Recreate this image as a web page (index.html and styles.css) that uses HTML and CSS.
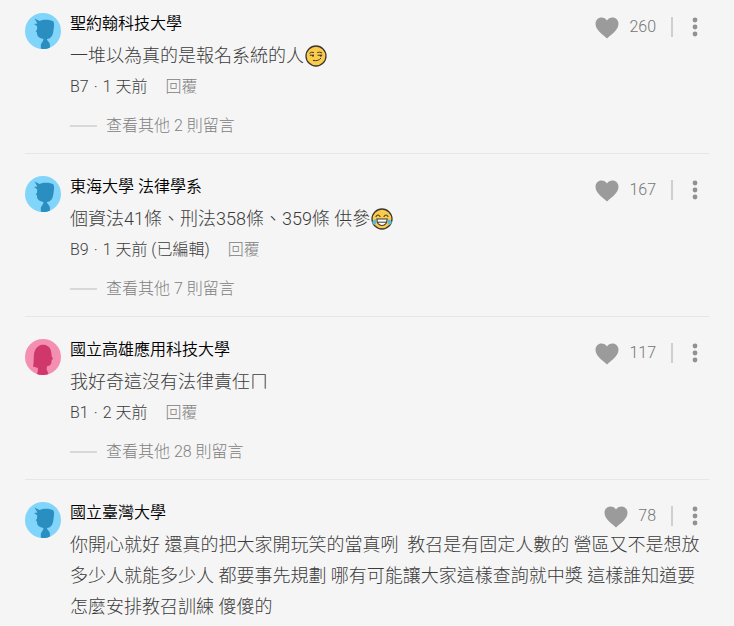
FILE: index.html
```html
<!DOCTYPE html>
<html lang="zh-Hant">
<head>
  <meta charset="UTF-8">
  <meta name="viewport" content="width=device-width, initial-scale=1.0">
  <title>留言</title>
  <link rel="stylesheet" href="styles.css">
</head>
<body>
  <!-- 共用圖示 -->
  <svg class="sprite" aria-hidden="true">
    <symbol id="boy" viewBox="0 0 36 36">
      <circle cx="18" cy="18" r="18" fill="#81d4fa"/>
      <path d="M9.500 5.500 L14.500 8 C18 6.400 25 6.200 28.500 8.400 C29.600 11 28.800 15 28.200 19 C27.600 23.500 25 25.800 22 26 C21.800 28 24.600 29 24.800 31 L25 34.500 C22 36.300 19 36.300 15.800 35.800 L15.900 31.500 C16.500 29.500 18.500 28.500 18.400 26 C14.500 25.400 12.200 23.600 12 20.800 L11.800 19 L10.600 18.300 L12 16.800 L12.200 13.200 L9 11 L12.400 10.600 Z" fill="#2a8fc0"/>
    </symbol>
    <symbol id="girl" viewBox="0 0 36 36">
      <circle cx="18" cy="18" r="18" fill="#f48fb1"/>
      <path d="M8 27.500 C9.500 22 7.800 16 10 11.500 C12 6.500 17 5 21 6.200 C25.500 7.500 26.500 12 26.600 17 L28 20 L26.600 21 C26.600 25 25.500 27 22 27.200 L21.600 30 C22 32 23 33 23.400 35 C20 36.400 15 36.300 12 35 C12.800 33 13 31.500 12.900 29 Z" fill="#d0386c"/>
    </symbol>
    <symbol id="heart" viewBox="0 0 24 22">
      <path d="M12 21.500 C9 18.500 0.500 13.500 0.500 6.800 C0.500 3 3.200 0.500 6.500 0.500 C8.800 0.500 10.900 1.700 12 3.600 C13.100 1.700 15.200 0.500 17.500 0.500 C20.800 0.500 23.500 3 23.500 6.800 C23.500 13.500 15 18.500 12 21.500 Z" fill="#9b9b9b"/>
    </symbol>
    <symbol id="dots" viewBox="0 0 6 20">
      <circle cx="3" cy="3" r="2.400" fill="#919191"/>
      <circle cx="3" cy="10" r="2.400" fill="#919191"/>
      <circle cx="3" cy="17" r="2.400" fill="#919191"/>
    </symbol>
  </svg>

  <main class="comments">
    <article class="comment">
      <svg class="avatar" aria-hidden="true"><use href="#boy"/></svg>
      <div class="content">
        <header class="head">
          <h2 class="school">聖約翰科技大學</h2>
          <div class="actions">
            <button class="like" type="button"><svg class="heart" aria-hidden="true"><use href="#heart"/></svg>260</button>
            <button class="more" type="button" aria-label="更多"><svg class="dots" aria-hidden="true"><use href="#dots"/></svg></button>
          </div>
        </header>
        <p class="text">一堆以為真的是報名系統的人<svg class="emoji" viewBox="0 0 22 22" role="img" aria-label="😏"><circle cx="11" cy="11" r="10" fill="#fccb4c" stroke="#3b3833" stroke-width="1.300"/><path d="M4.800 8 Q6.500 6.600 8.600 7.400 M12.600 7.400 Q14.800 6.400 16.800 7.800 M5.200 10.200 H8.600 M13 10.200 H16.800 M8.300 15.500 Q13.500 16.500 15.800 13.300" fill="none" stroke="#3b3833" stroke-width="1" stroke-linecap="round"/><circle cx="8" cy="10.800" r="1" fill="#3b3833"/><circle cx="15.800" cy="10.800" r="1" fill="#3b3833"/></svg></p>
        <div class="meta"><span>B7<i class="dot">·</i>1 天前</span><button class="reply" type="button">回覆</button></div>
        <button class="expand" type="button">查看其他 2 則留言</button>
      </div>
    </article>

    <article class="comment">
      <svg class="avatar" aria-hidden="true"><use href="#boy"/></svg>
      <div class="content">
        <header class="head">
          <h2 class="school">東海大學 法律學系</h2>
          <div class="actions">
            <button class="like" type="button"><svg class="heart" aria-hidden="true"><use href="#heart"/></svg>167</button>
            <button class="more" type="button" aria-label="更多"><svg class="dots" aria-hidden="true"><use href="#dots"/></svg></button>
          </div>
        </header>
        <p class="text">個資法41條、刑法358條、359條 供參<svg class="emoji" viewBox="0 0 22 22" role="img" aria-label="😂"><circle cx="11" cy="11" r="10" fill="#fccb4c" stroke="#3b3833" stroke-width="1.300"/><path d="M5 8.500 Q7 5.500 9 8.500 M13 8.500 Q15 5.500 17 8.500" fill="none" stroke="#3b3833" stroke-width="1.100" stroke-linecap="round"/><path d="M5.800 11 H16.200 Q15.800 17.500 11 17.500 Q6.200 17.500 5.800 11 Z" fill="#fff" stroke="#3b3833" stroke-width="1.200"/><path d="M7 14.200 H15" stroke="#3b3833" stroke-width="1"/><path d="M5.500 11 Q1 12 1.200 15 Q2 17.500 4.500 16.500 Q6 15 5.500 11 Z M16.500 11 Q21 12 20.800 15 Q20 17.500 17.500 16.500 Q16 15 16.500 11 Z" fill="#61b9cf"/></svg></p>
        <div class="meta"><span>B9<i class="dot">·</i>1 天前 (已編輯)</span><button class="reply" type="button">回覆</button></div>
        <button class="expand" type="button">查看其他 7 則留言</button>
      </div>
    </article>

    <article class="comment">
      <svg class="avatar" aria-hidden="true"><use href="#girl"/></svg>
      <div class="content">
        <header class="head">
          <h2 class="school">國立高雄應用科技大學</h2>
          <div class="actions">
            <button class="like" type="button"><svg class="heart" aria-hidden="true"><use href="#heart"/></svg>117</button>
            <button class="more" type="button" aria-label="更多"><svg class="dots" aria-hidden="true"><use href="#dots"/></svg></button>
          </div>
        </header>
        <p class="text">我好奇這沒有法律責任ㄇ</p>
        <div class="meta"><span>B1<i class="dot">·</i>2 天前</span><button class="reply" type="button">回覆</button></div>
        <button class="expand" type="button">查看其他 28 則留言</button>
      </div>
    </article>

    <article class="comment">
      <svg class="avatar" aria-hidden="true"><use href="#boy"/></svg>
      <div class="content">
        <header class="head">
          <h2 class="school">國立臺灣大學</h2>
          <div class="actions">
            <button class="like" type="button"><svg class="heart" aria-hidden="true"><use href="#heart"/></svg>78</button>
            <button class="more" type="button" aria-label="更多"><svg class="dots" aria-hidden="true"><use href="#dots"/></svg></button>
          </div>
        </header>
        <p class="text">你開心就好 還真的把大家開玩笑的當真咧&nbsp; 教召是有固定人數的 營區又不是想放多少人就能多少人 都要事先規劃 哪有可能讓大家這樣查詢就中獎 這樣誰知道要怎麼安排教召訓練 傻傻的</p>
      </div>
    </article>
  </main>
</body>
</html>
```
FILE: styles.css
```css
* {
  box-sizing: border-box;
}

body {
  margin: 0;
  background: #f5f5f5;
  color: #3c3c3c;
  font-family: Roboto, "Noto Sans CJK TC", sans-serif;
  font-size: 16px;
  font-weight: 300;
  line-height: 24px;
}

button {
  padding: 0;
  border: 0;
  background: none;
  color: inherit;
  font: inherit;
  cursor: pointer;
}

.sprite {
  display: none;
}

.comments {
  padding: 0 25px;
}

.comment {
  display: flex;
  gap: 9px;
  padding: 21px 0 15px;
  border-bottom: 1px solid #e6e6e6;
}

.comment:first-child {
  padding-top: 12px;
}

.comment:last-child {
  padding-bottom: 0;
  border-bottom: 0;
}

.avatar {
  flex: none;
  width: 36px;
  height: 36px;
  margin-top: 1px;
}

.content {
  flex: 1;
  min-width: 0;
}

.head {
  display: flex;
  justify-content: space-between;
  height: 28px;
}

.school {
  margin: 0;
  color: #000;
  font-size: 16px;
  font-weight: 350;
}

.actions {
  display: flex;
  align-items: center;
  padding-top: 2px;
  color: #757575;
}

.like {
  display: flex;
  align-items: center;
  gap: 10px;
  padding-right: 15px;
}

.heart {
  width: 24px;
  height: 22px;
  margin-top: 2px;
}

.more {
  display: flex;
  justify-content: flex-end;
  width: 38px;
  height: 20px;
  padding-right: 11px;
  border-left: 2px solid #cfcfcf;
}

.dots {
  width: 6px;
  height: 20px;
}

.text {
  margin: 0;
  font-size: 18px;
  line-height: 31px;
}

.emoji {
  width: 22px;
  height: 22px;
  margin-left: 1px;
  vertical-align: -5px;
}

.meta {
  display: flex;
  gap: 18px;
  margin-top: 4px;
}

.dot {
  margin: 0 5px;
  font-style: normal;
}

.reply {
  color: #808080;
}

.expand {
  display: flex;
  align-items: center;
  gap: 9px;
  margin-top: 15px;
  color: #808080;
}

.expand::before {
  content: "";
  width: 27px;
  height: 2px;
  background: #d8d8d8;
}
```
